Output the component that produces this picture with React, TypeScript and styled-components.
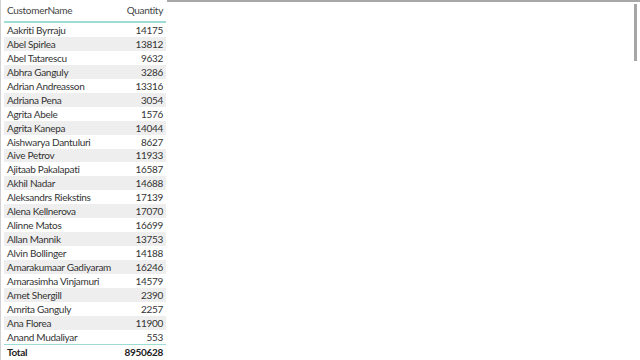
import React from 'react';
import styled, { createGlobalStyle } from 'styled-components';

const GlobalStyle = createGlobalStyle`
  html, body {
    margin: 0;
    padding: 0;
    background: #ffffff;
  }
`;

const Page = styled.div`
  position: relative;
  width: 640px;
  height: 360px;
  overflow: hidden;
  background: #ffffff;
  border-left: 1px solid #d0d0d0;
  box-sizing: border-box;
  display: flex;
  font-family: 'Lato', 'Open Sans', sans-serif;
  letter-spacing: -0.3px;
`;

const TopRule = styled.div`
  position: absolute;
  top: 0;
  left: 166px;
  right: 0;
  height: 2px;
  background: #a8a8a8;
`;

const ScrollThumb = styled.div`
  position: absolute;
  top: 4px;
  right: 3px;
  width: 3px;
  height: 57px;
  background: #a6a6a6;
`;

const Table = styled.div`
  width: 162px;
  margin-left: 3px;
  display: flex;
  flex-direction: column;
`;

const HeaderRow = styled.div`
  display: flex;
  justify-content: space-between;
  align-items: center;
  height: 21px;
  padding: 0 3px;
  font-size: 10px;
  color: #444444;
  border-bottom: 2px solid #9fdcd6;
`;

const Row = styled.div<{ $striped: boolean }>`
  display: flex;
  justify-content: space-between;
  align-items: center;
  height: 14px;
  padding: 0 3px;
  font-size: 10px;
  color: #333333;
  background: ${(p) => (p.$striped ? '#eeeeee' : '#ffffff')};
`;

const TotalRow = styled.div`
  display: flex;
  justify-content: space-between;
  align-items: center;
  height: 15px;
  padding: 0 3px;
  font-size: 10px;
  font-weight: 700;
  color: #222222;
  border-top: 1px solid #9fdcd6;
`;

const rows: [string, number][] = [
  ['Aakriti Byrraju', 14175],
  ['Abel Spirlea', 13812],
  ['Abel Tatarescu', 9632],
  ['Abhra Ganguly', 3286],
  ['Adrian Andreasson', 13316],
  ['Adriana Pena', 3054],
  ['Agrita Abele', 1576],
  ['Agrita Kanepa', 14044],
  ['Aishwarya Dantuluri', 8627],
  ['Aive Petrov', 11933],
  ['Ajitaab Pakalapati', 16587],
  ['Akhil Nadar', 14688],
  ['Aleksandrs Riekstins', 17139],
  ['Alena Kellnerova', 17070],
  ['Alinne Matos', 16699],
  ['Allan Mannik', 13753],
  ['Alvin Bollinger', 14188],
  ['Amarakumaar Gadiyaram', 16246],
  ['Amarasimha Vinjamuri', 14579],
  ['Amet Shergill', 2390],
  ['Amrita Ganguly', 2257],
  ['Ana Florea', 11900],
  ['Anand Mudaliyar', 553],
];

const App: React.FC = () => {
  return (
    <>
      <GlobalStyle />
      <Page>
        <TopRule />
        <ScrollThumb />
        <Table>
          <HeaderRow>
            <span>CustomerName</span>
            <span>Quantity</span>
          </HeaderRow>
          {rows.map(([name, qty], i) => (
            <Row key={name} $striped={i % 2 === 1}>
              <span>{name}</span>
              <span>{qty}</span>
            </Row>
          ))}
          <TotalRow>
            <span>Total</span>
            <span>8950628</span>
          </TotalRow>
        </Table>
      </Page>
    </>
  );
};

export default App;
